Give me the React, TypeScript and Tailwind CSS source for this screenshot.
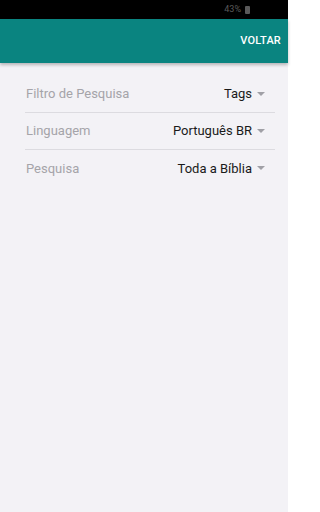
import React from 'react';

const rows = [
  { label: 'Filtro de Pesquisa', value: 'Tags' },
  { label: 'Linguagem', value: 'Português BR' },
  { label: 'Pesquisa', value: 'Toda a Bíblia' },
];

const Caret = () => (
  <svg width="8" height="5" viewBox="0 0 8 5" className="ml-[5px]">
    <path d="M0 0 L8 0 L4 4 Z" fill="#a0a0a6" />
  </svg>
);

export default function App() {
  return (
    <div className="w-[288px] h-[512px] bg-[#f3f2f6] flex flex-col" style={{ fontFamily: 'Roboto, "Noto Sans", sans-serif' }}>
      <div className="h-[19px] bg-black flex items-center justify-end pr-[38px] gap-[4px]">
        <span className="text-[9px] text-[#5a5a5a]">43%</span>
        <div className="w-[5px] h-[8px] bg-[#5a5a5a] rounded-[1px]" />
      </div>
      <div className="h-[44px] bg-[#0a8480] flex items-center justify-end pr-[7px] shadow-[0_2px_3px_rgba(0,0,0,0.25)] relative z-10">
        <span className="text-white text-[11px] font-medium tracking-[0.2px]">VOLTAR</span>
      </div>
      <div className="pl-[25px] pr-[13px] pt-[13px]">
        {rows.map((r, i) => (
          <div key={r.label} className={`h-[37px] flex items-center justify-between ${i < rows.length - 1 ? 'border-b border-[#dcdbe0]' : ''}`}>
            <span className="text-[13px] text-[#a5a4a9] pl-[1px]">{r.label}</span>
            <span className="flex items-center pr-[10px]">
              <span className="text-[13px] text-[#1a1a1a]">{r.value}</span>
              <Caret />
            </span>
          </div>
        ))}
      </div>
    </div>
  );
}
